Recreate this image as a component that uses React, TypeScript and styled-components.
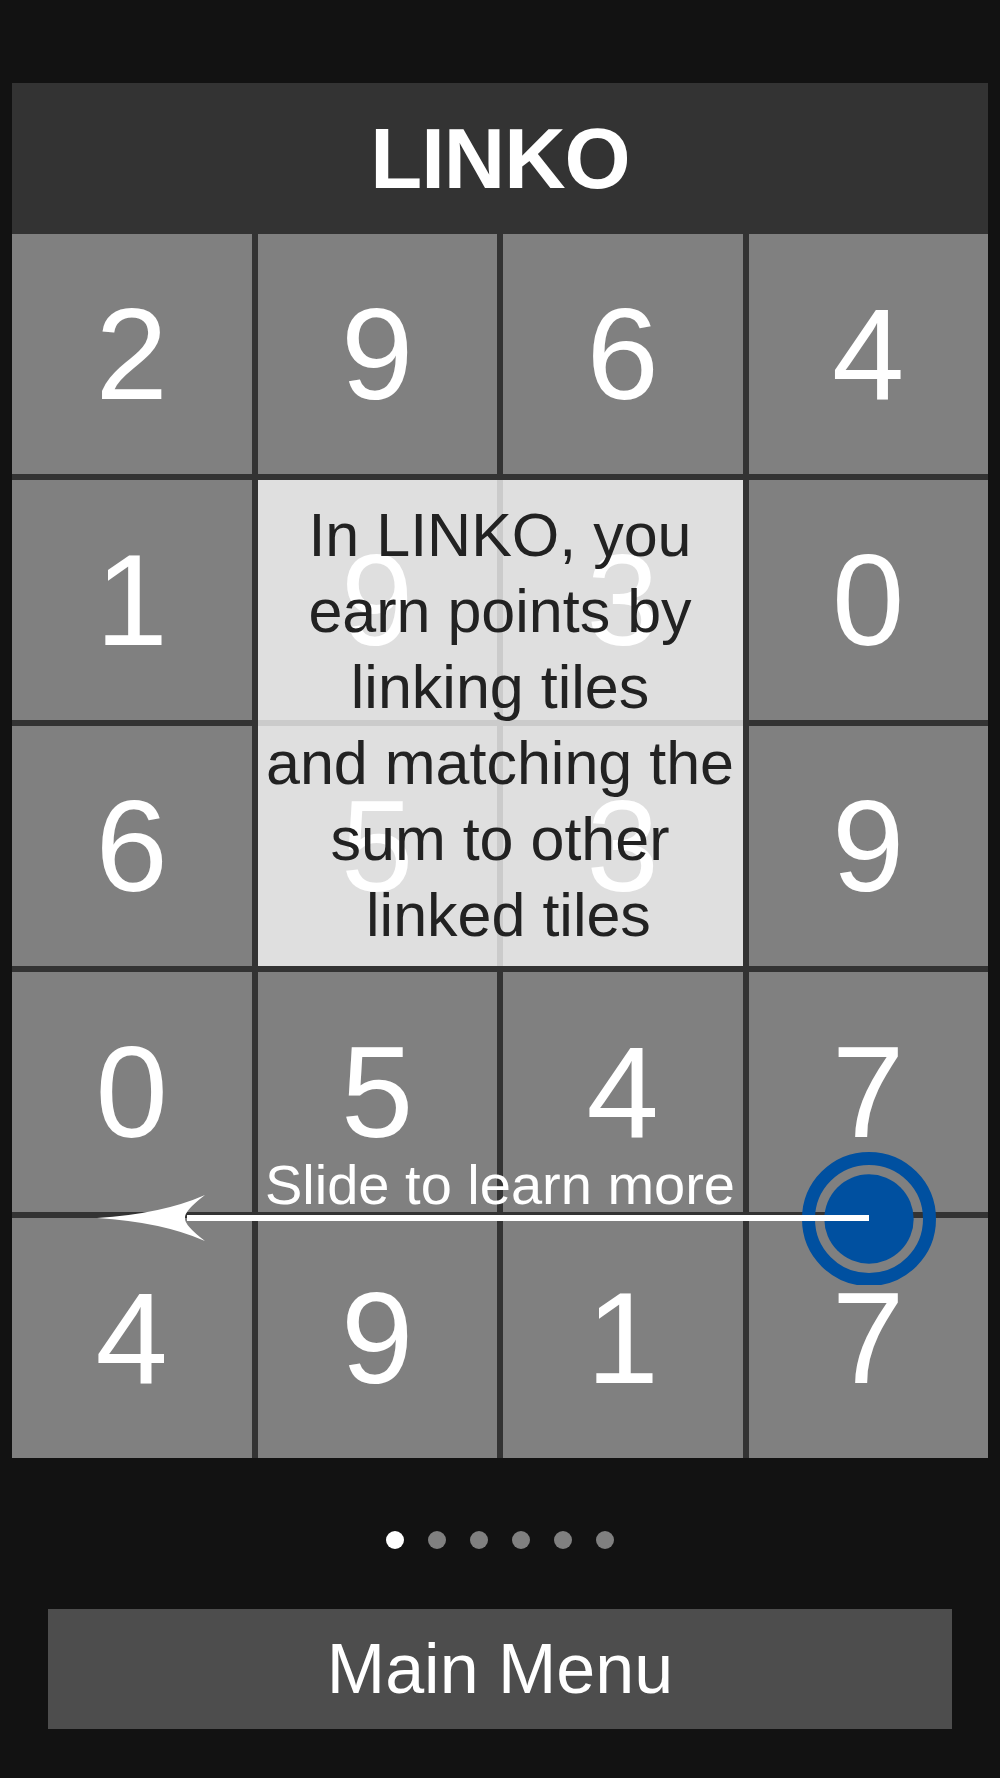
import styled, { createGlobalStyle } from "styled-components";

const GlobalStyle = createGlobalStyle`
    html, body {
        margin: 0;
        padding: 0;
        background: #121212;
    }
    body {
        font-family: "Liberation Sans", Arial, sans-serif;
    }
`;

const Screen = styled.div`
    width: 1000px;
    height: 1778px;
    box-sizing: border-box;
    padding: 83px 12px 0;
    display: flex;
    flex-direction: column;
`;

const Header = styled.div`
    height: 151px;
    background: #333333;
    display: flex;
    align-items: center;
    justify-content: center;
`;

const Title = styled.h1`
    margin: 0;
    font-size: 85px;
    font-weight: 700;
    letter-spacing: -1px;
    color: #ffffff;
    line-height: 1;
`;

const Board = styled.div`
    display: grid;
    grid-template-columns: repeat(4, 1fr);
    grid-template-rows: repeat(5, 240px);
    gap: 6px;
    background: #333333;
`;

const Tile = styled.div<{ $row: number; $col: number }>`
    grid-row: ${(p) => p.$row};
    grid-column: ${(p) => p.$col};
    background: #808080;
    color: #ffffff;
    font-size: 130px;
    line-height: 1;
    display: flex;
    align-items: center;
    justify-content: center;
`;

const InfoPanel = styled.div`
    grid-area: 2 / 2 / 4 / 4;
    z-index: 1;
    background: rgba(255, 255, 255, 0.75);
    display: flex;
    flex-direction: column;
    justify-content: center;
    padding-top: 4px;
    color: #222222;
    font-size: 61px;
    line-height: 76px;
    text-align: center;
`;

const InfoLine = styled.div`
    white-space: pre;
`;

const Gesture = styled.div`
    grid-area: 4 / 1 / 6 / 5;
    z-index: 2;
    display: grid;
    place-items: center;
    pointer-events: none;
`;

const Caption = styled.div`
    grid-area: 1 / 1;
    margin-bottom: 60px;
    color: #ffffff;
    font-size: 56px;
    line-height: 1;
`;

const GestureArt = styled.svg`
    grid-area: 1 / 1;
    display: block;
`;

const Pager = styled.div`
    margin-top: 73px;
    display: flex;
    justify-content: center;
    gap: 24px;
`;

const Dot = styled.span<{ $active?: boolean }>`
    width: 18px;
    height: 18px;
    border-radius: 50%;
    background: ${(p) => (p.$active ? "#ffffff" : "#808080")};
`;

const MenuButton = styled.button`
    margin: 60px 36px 0;
    height: 120px;
    border: none;
    background: #4d4d4d;
    color: #ffffff;
    font-family: "Liberation Sans", Arial, sans-serif;
    font-size: 70px;
    cursor: pointer;
`;

const numbers = [
    [2, 9, 6, 4],
    [1, 9, 3, 0],
    [6, 5, 3, 9],
    [0, 5, 4, 7],
    [4, 9, 1, 7],
];

const infoLines = ["In LINKO, you", "earn points by", "linking tiles", "and matching the", "sum to other", " linked tiles"];

const App = () => {
    return (
        <>
            <GlobalStyle />
            <Screen>
                <Header>
                    <Title>LINKO</Title>
                </Header>
                <Board>
                    {numbers.map((row, r) =>
                        row.map((n, c) => (
                            <Tile key={`${r}-${c}`} $row={r + 1} $col={c + 1}>
                                {n}
                            </Tile>
                        ))
                    )}
                    <InfoPanel>
                        {infoLines.map((line) => (
                            <InfoLine key={line}>{line}</InfoLine>
                        ))}
                    </InfoPanel>
                    <Gesture>
                        <GestureArt width="976" height="140" viewBox="0 0 976 140">
                            <circle cx="857" cy="74" r="60.5" fill="none" stroke="#0050a0" strokeWidth="13" />
                            <circle cx="857" cy="74" r="44.7" fill="#0050a0" />
                            <line x1="175" y1="73" x2="857" y2="73" stroke="#ffffff" strokeWidth="6" />
                            <path d="M85 73 Q150 69 193 50 Q172 66 173 73 Q172 80 193 96 Q150 77 85 73 Z" fill="#ffffff" />
                        </GestureArt>
                        <Caption>Slide to learn more</Caption>
                    </Gesture>
                </Board>
                <Pager>
                    {[0, 1, 2, 3, 4, 5].map((i) => (
                        <Dot key={i} $active={i === 0} />
                    ))}
                </Pager>
                <MenuButton>Main Menu</MenuButton>
            </Screen>
        </>
    );
};

export default App;
